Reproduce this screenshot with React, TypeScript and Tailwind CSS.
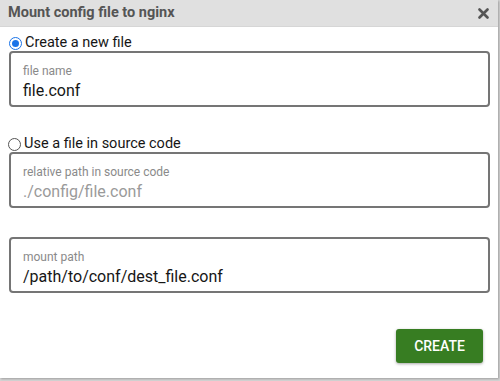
import React from 'react';

function Field({ label, value, disabled }: { label: string; value: string; disabled?: boolean }) {
  return (
    <div className="h-[56px] w-[481px] rounded-[4px] border-2 border-[#757575] px-[12px] pt-[11px]">
      <div className="text-[12px] leading-[14px] text-[#8a8a8a]">{label}</div>
      <div className={`mt-[3px] text-[16px] leading-[20px] ${disabled ? 'text-[#9a9a9a]' : 'text-[#161616]'}`}>
        {value}
      </div>
    </div>
  );
}

function Radio({ checked, label }: { checked?: boolean; label: string }) {
  return (
    <label className="flex h-[14px] items-center gap-[3px] text-[14.5px] leading-[14px] text-[#161616]">
      {checked ? (
        <span className="flex h-[13px] w-[13px] items-center justify-center rounded-full border-[1.5px] border-[#1a73e8]">
          <span className="h-[7px] w-[7px] rounded-full bg-[#1a73e8]" />
        </span>
      ) : (
        <span className="h-[13px] w-[13px] rounded-full border border-[#555]" />
      )}
      <span>{label}</span>
    </label>
  );
}

export default function App() {
  return (
    <div className="h-[381px] w-[500px] bg-[#d4d4d4] font-['Roboto',sans-serif]">
      <div className="flex h-[378px] w-[498px] flex-col bg-white shadow-[1px_1px_2px_rgba(0,0,0,0.25)]">
        <div className="flex h-[27px] items-center justify-between border-b border-[#d6d6d6] bg-[#e0e0e0] pl-[8px] pr-[9px]">
          <span className="text-[14.5px] font-bold text-[#555]">Mount config file to nginx</span>
          <svg width="11" height="11" viewBox="0 0 11 11">
            <path d="M1.5 1.5 L9.5 9.5 M9.5 1.5 L1.5 9.5" stroke="#555" strokeWidth="2.6" strokeLinecap="round" />
          </svg>
        </div>
        <div className="flex flex-1 flex-col pl-[8px] pt-[9px]">
          <div className="pl-[1px]">
            <Radio checked label="Create a new file" />
          </div>
          <div className="mt-[1px] pl-[1px]">
            <Field label="file name" value="file.conf" />
          </div>
          <div className="mt-[30px]">
            <Radio label="Use a file in source code" />
          </div>
          <div className="mt-[1px] pl-[1px]">
            <Field label="relative path in source code" value="./config/file.conf" disabled />
          </div>
          <div className="mt-[29px] pl-[1px]">
            <Field label="mount path" value="/path/to/conf/dest_file.conf" />
          </div>
          <div className="mt-[36px] flex justify-end pr-[15px]">
            <button className="h-[34px] w-[87px] rounded-[3px] bg-[#377d22] text-[14px] font-medium text-white shadow-[0_1px_3px_rgba(0,0,0,0.35)]">
              CREATE
            </button>
          </div>
        </div>
      </div>
    </div>
  );
}
